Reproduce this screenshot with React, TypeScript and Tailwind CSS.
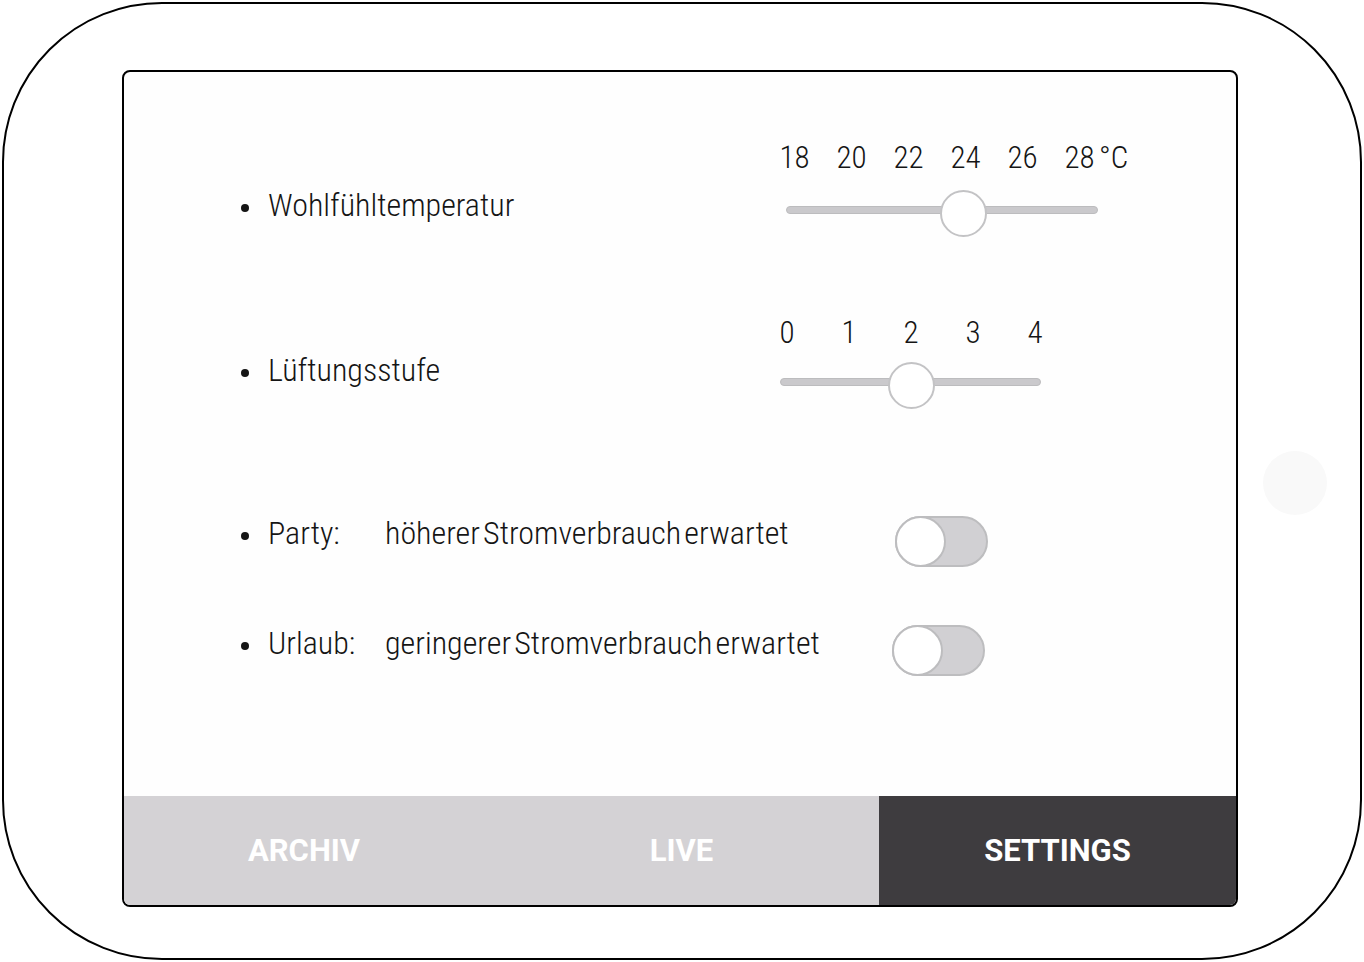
const font = "font-['Roboto_Condensed','Roboto',sans-serif] [font-stretch:condensed]";

const Bullet = ({ label }: { label: string }) => (
  <div className="flex items-start">
    <span className="ml-[-1px] mt-[17px] h-[8px] w-[8px] rounded-full bg-[#151515]" />
    <span className="ml-[19px] whitespace-nowrap">{label}</span>
  </div>
);

const Slider = ({
  labels,
  step,
  trackOffset,
  trackWidth,
  thumbLeft,
  unit,
  gap,
}: {
  labels: string[];
  step: string;
  trackOffset: string;
  trackWidth: string;
  thumbLeft: string;
  unit?: boolean;
  gap: string;
}) => (
  <div className="flex flex-col text-[31px]">
    <div className="flex h-[36px] items-center">
      {labels.map((l) => (
        <span key={l} className={`${step} text-center`}>
          {l}
        </span>
      ))}
      {unit && <span className="-ml-[9px]">°C</span>}
    </div>
    <div
      className={`relative h-[8px] rounded-full border border-[#bcbcbe] bg-[#cac9cc] ${trackOffset} ${trackWidth} ${gap}`}
    >
      <span
        className={`absolute top-[-17px] h-[47px] w-[47px] rounded-full border-2 border-[#c3c3c5] bg-white ${thumbLeft}`}
      />
    </div>
  </div>
);

const Toggle = () => (
  <div className="flex h-[51px] w-[93px] items-center rounded-full border-2 border-[#bdbdbf] bg-[#d1d0d3]">
    <span className="-ml-[2px] h-[51px] w-[51px] rounded-full border-2 border-[#bdbdbf] bg-white" />
  </div>
);

export default function App() {
  return (
    <div className="h-[962px] w-[1364px] overflow-hidden bg-white">
      <div className="ml-[2px] mt-[2px] flex h-[958px] w-[1360px] items-start rounded-[160px] border-2 border-black pl-[118px] pt-[66px]">
        <div
          className={`flex h-[837px] w-[1116px] flex-col overflow-hidden rounded-[8px] border-2 border-black bg-[#fefefe] text-[32px] font-light leading-[36px] text-[#151515] ${font}`}
        >
          <div className="flex flex-1 flex-col pl-[118px] pt-[68px]">
            {/* Wohlfühltemperatur */}
            <div className="flex h-[100px] items-start">
              <div className="mt-[47px] w-[524px]">
                <Bullet label="Wohlfühltemperatur" />
              </div>
              <Slider
                labels={["18", "20", "22", "24", "26", "28"]}
                step="w-[57px]"
                trackOffset="ml-[20px]"
                trackWidth="w-[312px]"
                thumbLeft="left-[153px]"
                gap="mt-[30px]"
                unit
              />
            </div>

            {/* Lüftungsstufe */}
            <div className="mt-[75px] flex h-[94px] items-start">
              <div className="mt-[37px] w-[514px]">
                <Bullet label="Lüftungsstufe" />
              </div>
              <Slider
                labels={["0", "1", "2", "3", "4"]}
                step="w-[62px]"
                trackOffset="ml-[24px]"
                trackWidth="w-[261px]"
                thumbLeft="left-[107px]"
                gap="mt-[27px]"
              />
            </div>

            {/* Party */}
            <div className="mt-[106px] flex items-start">
              <div className="w-[143px]">
                <Bullet label="Party:" />
              </div>
              <span className="w-[510px] whitespace-nowrap [word-spacing:-4px]">höherer Stromverbrauch erwartet</span>
              <div className="mt-[1px]">
                <Toggle />
              </div>
            </div>

            {/* Urlaub */}
            <div className="mt-[58px] flex items-start">
              <div className="w-[143px]">
                <Bullet label="Urlaub:" />
              </div>
              <span className="w-[507px] whitespace-nowrap [word-spacing:-4px]">geringerer Stromverbrauch erwartet</span>
              <Toggle />
            </div>
          </div>

          <div className="flex h-[109px] font-['Roboto',sans-serif] text-[31px] font-bold text-white [font-stretch:normal]">
            <div className="flex w-[360px] items-center justify-center bg-[#d4d2d5]">ARCHIV</div>
            <div className="flex w-[395px] items-center justify-center bg-[#d4d2d5]">LIVE</div>
            <div className="flex flex-1 items-center justify-center bg-[#3e3c3f]">SETTINGS</div>
          </div>
        </div>
        <div className="ml-[25px] mt-[381px] h-[64px] w-[64px] rounded-full bg-[#f9f9f9]" />
      </div>
    </div>
  );
}
